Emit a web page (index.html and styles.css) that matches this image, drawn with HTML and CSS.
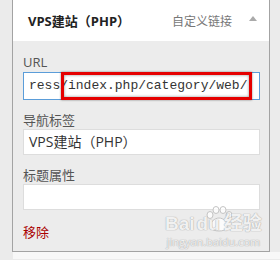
FILE: index.html
```html
<!DOCTYPE html>
<html lang="zh-CN">
<head>
    <meta charset="UTF-8">
    <title>菜单项</title>
    <link rel="stylesheet" href="styles.css">
</head>
<body>
    <!-- menu item panel, expanded -->
    <div class="menu-item">
        <div class="item-bar">
            <span class="item-title">VPS建站（PHP）</span>
            <span class="item-type">自定义链接</span>
            <span class="item-toggle"></span>
        </div>

        <div class="item-settings">
            <label class="field-label">URL</label>
            <div class="url-wrap">
                <div class="field url-field focused">ress/index.php/category/web/<span class="caret"></span></div>
                <div class="mark-box"></div>
            </div>

            <label class="field-label">导航标签</label>
            <div class="field">VPS建站（PHP）</div>

            <label class="field-label">标题属性</label>
            <div class="field"></div>

            <a class="remove-link" href="#">移除</a>

            <div class="watermark">
                <svg class="wm-paw" width="28" height="26" viewBox="0 0 28 26">
                    <g fill="rgba(255,255,255,0.8)" stroke="#c4c4c4" stroke-width="1">
                        <ellipse cx="5" cy="9" rx="3" ry="3.5"/>
                        <ellipse cx="11" cy="4" rx="3" ry="3.5"/>
                        <ellipse cx="18" cy="4" rx="3" ry="3.5"/>
                        <ellipse cx="24" cy="9" rx="3" ry="3.5"/>
                        <path d="M6 22 C4 16 10 12 14 12 C18 12 24 16 22 22 C20 26 8 26 6 22 Z"/>
                    </g>
                </svg>
                <div class="wm-logo">Bai<span class="wm-du">du</span>经验</div>
                <div class="wm-url">jingyan.baidu.com</div>
            </div>
        </div>
    </div>
    <div class="next-item"></div>
</body>
</html>
```

FILE: styles.css
```css
body {
    margin: 0;
    background-color: #ebebeb;
    font-family: "Open Sans", "Noto Sans CJK SC", sans-serif;
    color: #444;
    overflow: hidden;
}

.menu-item {
    margin-left: 12px;
    width: 256px;
    border: 1px solid #a3a3a3;
    border-top: none;
}

.item-bar {
    display: flex;
    align-items: center;
    height: 41px;
    padding: 0 12px 0 15px;
    background-color: #fff;
}

.item-title {
    flex: 1;
    font-size: 13px;
    font-weight: bold;
    color: #222;
}

.item-type {
    font-size: 12px;
    color: #777;
    margin-right: 17px;
}

.item-toggle {
    width: 0;
    height: 0;
    margin-bottom: 5px;
    border-left: 4px solid transparent;
    border-right: 4px solid transparent;
    border-bottom: 5px solid #aaa;
}

.item-settings {
    position: relative;
    padding: 13px 9px 11px 10px;
    background-color: #ececec;
}

.field-label {
    display: block;
    height: 16px;
    font-size: 13px;
    line-height: 16px;
    color: #555;
    margin-bottom: 1px;
}

.field {
    box-sizing: border-box;
    height: 26px;
    margin-bottom: 12px;
    padding: 0 5px;
    background-color: #fff;
    border: 1px solid #ddd;
    font-size: 14px;
    line-height: 24px;
    color: #333;
    white-space: nowrap;
    overflow: hidden;
}

.url-wrap {
    position: relative;
    margin-top: 2px;
    margin-bottom: 12px;
}

.url-field {
    height: 28px;
    margin-bottom: 0;
    line-height: 26px;
    font-family: "Liberation Mono", monospace;
    font-size: 13px;
    color: #333;
}

.focused {
    border-color: #5b9dd9;
}

.caret {
    display: inline-block;
    width: 1px;
    height: 13px;
    margin-left: 2px;
    vertical-align: middle;
    background-color: #000;
}

/* red annotation frame over the url */
.mark-box {
    position: absolute;
    top: 0;
    left: 38px;
    width: 191px;
    height: 28px;
    box-sizing: border-box;
    border: 3px solid #e50000;
    box-shadow: 0 0 2px rgba(0, 0, 0, 0.45), inset 0 0 3px rgba(0, 0, 0, 0.45);
}

.remove-link {
    display: block;
    height: 16px;
    margin-top: 14px;
    font-size: 13px;
    line-height: 16px;
    color: #a00;
    text-decoration: none;
}

/* faint site watermark */
.watermark {
    position: absolute;
    z-index: 1;
    left: 152px;
    top: 172px;
    text-align: center;
    color: rgba(255, 255, 255, 0.85);
    text-shadow: 0 0 1px #aaa, 0 0 1px #aaa;
}

.wm-paw {
    position: absolute;
    left: 40px;
    top: -7px;
    z-index: -1;
}

.wm-logo {
    font-family: "Liberation Sans", "Noto Sans CJK SC", sans-serif;
    font-size: 19px;
    font-weight: bold;
    line-height: 22px;
}

.wm-du {
    margin: 0 4px 0 2px;
}

.wm-url {
    font-size: 11px;
    line-height: 14px;
}

.next-item {
    margin-left: 13px;
    height: 7px;
    background-color: #f8f8f8;
}
```
